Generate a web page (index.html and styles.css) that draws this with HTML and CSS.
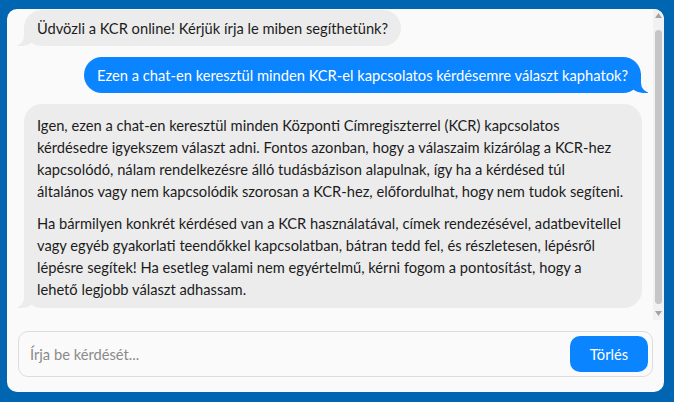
FILE: index.html
```html
<!DOCTYPE html>
<html lang="hu">
<head>
<meta charset="utf-8">
<title>KCR chat</title>
<link rel="stylesheet" href="styles.css">
</head>
<body>
<div class="card">
  <div class="chatrow">
    <div class="chat" id="chat">
      <div class="msg bot">Üdvözli a KCR online! Kérjük írja le miben segíthetünk?</div>
      <div class="msg user">Ezen a chat-en keresztül minden KCR-el kapcsolatos kérdésemre választ kaphatok?</div>
      <div class="msg bot long">
        <p>Igen, ezen a chat-en keresztül minden Központi Címregiszterrel (KCR) kapcsolatos<br>
        kérdésedre igyekszem választ adni. Fontos azonban, hogy a válaszaim kizárólag a KCR-hez<br>
        kapcsolódó, nálam rendelkezésre álló tudásbázison alapulnak, így ha a kérdésed túl<br>
        általános vagy nem kapcsolódik szorosan a KCR-hez, előfordulhat, hogy nem tudok segíteni.</p>
        <p>Ha bármilyen konkrét kérdésed van a KCR használatával, címek rendezésével, adatbevitellel<br>
        vagy egyéb gyakorlati teendőkkel kapcsolatban, bátran tedd fel, és részletesen, lépésről<br>
        lépésre segítek! Ha esetleg valami nem egyértelmű, kérni fogom a pontosítást, hogy a<br>
        lehető legjobb választ adhassam.</p>
      </div>
    </div>
    <div class="scrollbar" aria-hidden="true">
      <svg class="arrow" width="7" height="5" viewBox="0 0 7 5"><polygon points="3.5,0 7,5 0,5" fill="#a3a3a3"/></svg>
      <div class="thumb"></div>
      <svg class="arrow down" width="7" height="5" viewBox="0 0 7 5"><polygon points="0,0 7,0 3.5,5" fill="#a3a3a3"/></svg>
    </div>
  </div>
  <div class="composer">
    <div class="inputwrap">
      <input class="field" type="text" placeholder="Írja be kérdését...">
      <button class="clear" type="button">Törlés</button>
    </div>
  </div>
</div>
<script src="script.js"></script>
</body>
</html>
```
FILE: styles.css
```css
* { box-sizing: border-box; }
html, body { height: 100%; }
body {
  margin: 0;
  background: #0066b2;
  padding: 9px 10px 10px 7px;
  font-family: Lato, "Noto Sans", sans-serif;
  font-size: 14.7px;
  color: #1c1c1c;
}
.card {
  height: 383px;
  background: #fafafa;
  border-radius: 10px;
  overflow: hidden;
  display: flex;
  flex-direction: column;
}
.chatrow {
  flex: 1;
  min-height: 0;
  display: flex;
}
.chat {
  flex: 1;
  min-width: 0;
  overflow: hidden;
  display: flex;
  flex-direction: column;
  gap: 11px;
  padding: 12px 0 12px 17px;
}
.scrollbar {
  width: 11px;
  flex: none;
  background: #f1f1f1;
  display: flex;
  flex-direction: column;
  align-items: center;
  padding: 4px 0 4px;
}
.arrow { display: block; flex: none; }
.thumb {
  width: 7px;
  height: 274px;
  margin-top: 12px;
  border-radius: 4px;
  background: #c6c6c6;
}
.arrow.down { margin-top: auto; }
.msg {
  position: relative;
  flex: none;
  line-height: 22px;
  border-radius: 18px;
  padding: 7px 13px;
}
.msg p { margin: 0; white-space: nowrap; }
.msg p + p { margin-top: 10px; }
.bot {
  align-self: flex-start;
  max-width: 618px;
  background: #ececec;
  color: #1c1c1c;
}
.bot.long {
  align-self: stretch;
  margin-right: 11px;
  padding: 10px 13px 8px;
}
.user {
  align-self: flex-end;
  margin-right: 12px;
  background: #0a84ff;
  color: #fff;
}
.bot::before, .bot::after, .user::before, .user::after {
  content: "";
  position: absolute;
  bottom: 0;
  height: 20px;
}
.bot::before {
  left: -7px;
  width: 20px;
  background: #ececec;
  border-bottom-right-radius: 15px;
}
.bot::after {
  left: -10px;
  width: 10px;
  background: #fafafa;
  border-bottom-right-radius: 10px;
}
.user::before {
  right: -7px;
  width: 20px;
  background: #0a84ff;
  border-bottom-left-radius: 15px;
}
.user::after {
  right: -10px;
  width: 10px;
  background: #fafafa;
  border-bottom-left-radius: 10px;
}
.composer {
  padding: 11px 11px 15px 11px;
}
.inputwrap {
  height: 46px;
  border: 1px solid #dcdcdc;
  border-radius: 10px;
  display: flex;
  align-items: center;
  padding: 0 4px 0 11px;
  background: #fafafa;
}
.field {
  flex: 1;
  min-width: 0;
  border: none;
  outline: none;
  background: transparent;
  font: inherit;
  color: #1c1c1c;
  padding: 0;
}
.field::placeholder { color: #8a8a8a; }
.clear {
  width: 78px;
  height: 36px;
  border: none;
  border-radius: 10px;
  background: #0a84ff;
  color: #fff;
  font: inherit;
  cursor: pointer;
}
```
FILE: script.js
```js
var chat = document.getElementById('chat');
chat.scrollTop = chat.scrollHeight;
```
